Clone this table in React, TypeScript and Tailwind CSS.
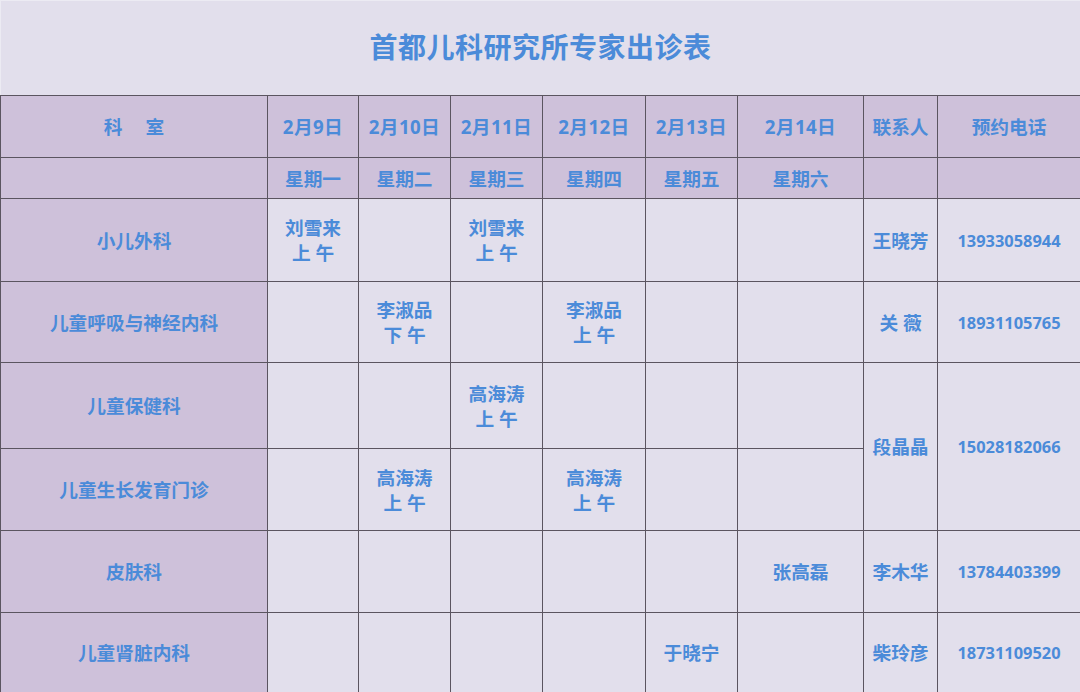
import React from "react";

const base = "flex flex-col items-center justify-center border-r border-b border-[#5b5560] font-bold leading-[25px] text-[#4b8bd9]";
const cell = base + " text-[18.7px]";
const head = cell + " bg-[#cec1da]";
const body = cell + " bg-[#e2dfec]";
const phoneCell = base + " text-[16.4px] bg-[#e2dfec]";

type Row = { dept: string; h: string; slots: (string[] | null)[]; contact?: string; phone?: string };

const rows: Row[] = [
  { dept: "小儿外科", h: "h-[83px]", slots: [["刘雪来", "上 午"], null, ["刘雪来", "上 午"], null, null, null], contact: "王晓芳", phone: "13933058944" },
  { dept: "儿童呼吸与神经内科", h: "h-[81px]", slots: [null, ["李淑品", "下 午"], null, ["李淑品", "上 午"], null, null], contact: "关 薇", phone: "18931105765" },
  { dept: "儿童保健科", h: "h-[86px]", slots: [null, null, ["高海涛", "上 午"], null, null, null], contact: "段晶晶", phone: "15028182066" },
  { dept: "儿童生长发育门诊", h: "h-[82px]", slots: [null, ["高海涛", "上 午"], null, ["高海涛", "上 午"], null, null] },
  { dept: "皮肤科", h: "h-[82px]", slots: [null, null, null, null, null, ["张高磊"]], contact: "李木华", phone: "13784403399" },
  { dept: "儿童肾脏内科", h: "h-[80px]", slots: [null, null, null, null, ["于晓宁"], null], contact: "柴玲彦", phone: "18731109520" },
];

const dates = ["2月9日", "2月10日", "2月11日", "2月12日", "2月13日", "2月14日"];
const weeks = ["星期一", "星期二", "星期三", "星期四", "星期五", "星期六"];

export default function App() {
  return (
    <div className="w-[1080px] h-[692px] overflow-hidden bg-[#e2dfec]" style={{ fontFamily: '"Noto Sans", "Noto Sans CJK SC", sans-serif' }}>
      <div className="h-[95px] flex items-center justify-center border-t border-l border-[#ecebf3]">
        <h1 className="text-[28px] font-bold text-[#4b8bd9] tracking-[0.5px] mt-[-2px]">首都儿科研究所专家出诊表</h1>
      </div>
      <div className="grid grid-cols-[267px_91px_92px_92px_103px_92px_126px_74px_143px] border-t border-l border-[#5b5560]">
        {/* header rows */}
        <div className={head + " h-[62px] flex-row gap-[23px]"}>
          <span>科</span>
          <span>室</span>
        </div>
        {dates.map((d) => (
          <div key={d} className={head + " tracking-[0.4px]"}>{d}</div>
        ))}
        <div className={head}>联系人</div>
        <div className={head}>预约电话</div>

        <div className={head + " h-[41px]"} />
        {weeks.map((w) => (
          <div key={w} className={head}>{w}</div>
        ))}
        <div className={head} />
        <div className={head} />

        {rows.map((r, i) => (
          <React.Fragment key={r.dept}>
            <div className={head + " " + r.h}>{r.dept}</div>
            {r.slots.map((s, j) => (
              <div key={j} className={body}>
                {s && s.map((t) => <span key={t}>{t}</span>)}
              </div>
            ))}
            {r.contact && (
              <div className={body + (i === 2 ? " row-span-2" : "")}>{r.contact}</div>
            )}
            {r.phone && (
              <div className={phoneCell + (i === 2 ? " row-span-2" : "")}>{r.phone}</div>
            )}
          </React.Fragment>
        ))}
      </div>
    </div>
  );
}
